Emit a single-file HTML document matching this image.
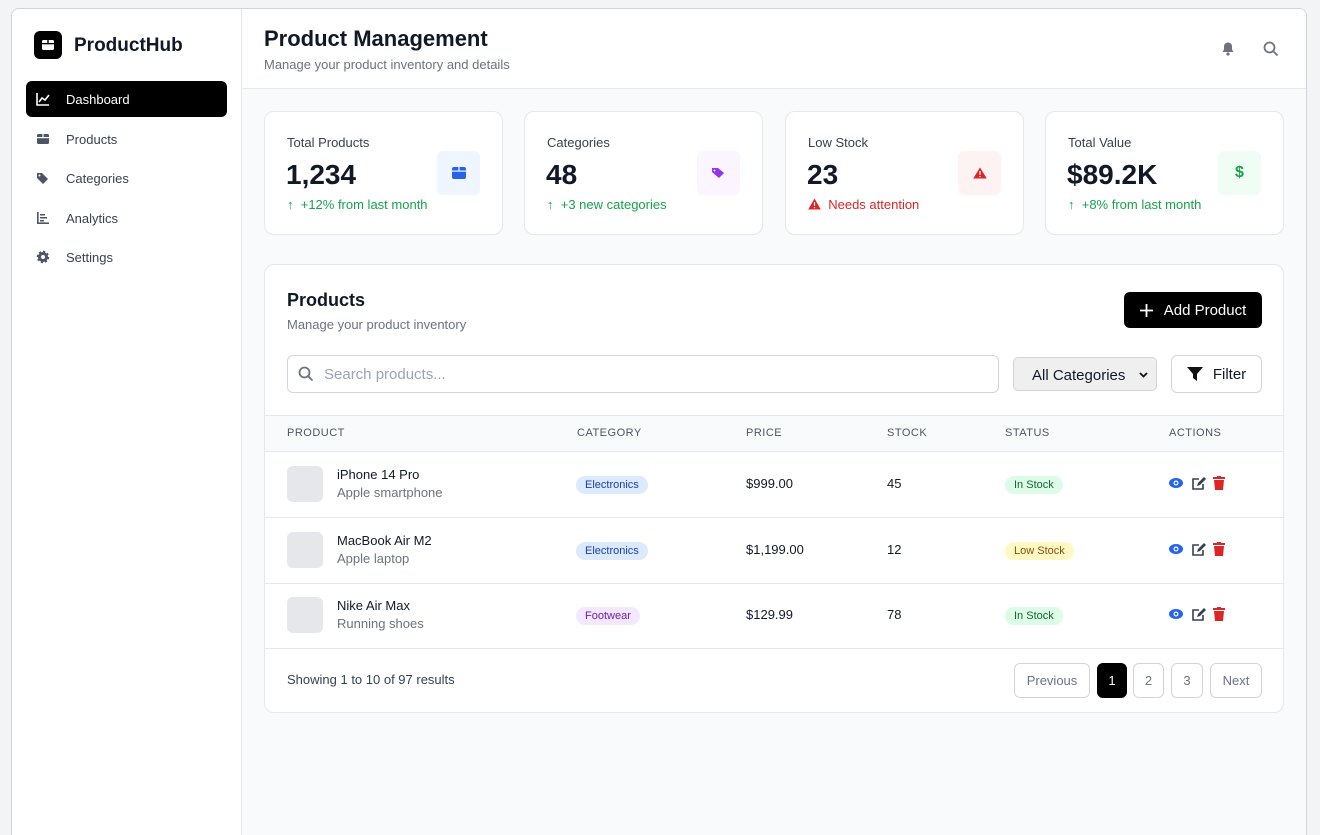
<!DOCTYPE html>
<html style="height:835px;overflow:hidden"><head><meta charset="utf-8"><style>
*{box-sizing:border-box;margin:0;padding:0}
html,body{width:1320px;height:835px;overflow:hidden}
body{background:#f3f4f6;font-family:"Liberation Sans",Arial,sans-serif;color:#111827;position:relative}
.frame{position:absolute;left:11px;top:8px;width:1296px;height:835px;border:1px solid #d1d5db;border-bottom:none;border-radius:8px 8px 0 0;background:#f9fafb;overflow:hidden}
.side{position:absolute;left:0;top:0;width:230px;height:100%;background:#fff;border-right:1px solid #e5e7eb}
.logo{position:absolute;left:22px;top:22px;width:28px;height:28px;background:#000;border-radius:6px}
.brand{position:absolute;left:62px;top:26px;font-size:19px;font-weight:bold}
.nav{position:absolute;left:14px;width:201px;height:36px;border-radius:6px;font-size:13px;color:#374151;display:flex;align-items:center;padding-left:40px}
.nav.act{background:#000;color:#fff}
.nav svg{position:absolute;left:10px;top:11px}
.hdr{position:absolute;left:231px;top:0;right:0;height:80px;background:#fff;border-bottom:1px solid #e5e7eb}
.hdr h1{position:absolute;left:21px;top:17px;font-size:22px}
.hdr p{position:absolute;left:21px;top:48px;font-size:13px;color:#6b7280}
.card{position:absolute;top:102px;width:239px;height:124px;background:#fff;border:1px solid #e5e7eb;border-radius:10px}
.card .l{position:absolute;left:22px;top:23px;font-size:13px;color:#374151}
.card .v{position:absolute;left:21px;top:47px;font-size:28px;font-weight:bold}
.card .s{position:absolute;left:22px;top:85px;font-size:13px;color:#16a34a}
.card .ic{position:absolute;left:172px;top:39px;width:43px;height:44px;border-radius:6px;display:flex;align-items:center;justify-content:center}
.panel{position:absolute;left:252px;top:255px;width:1020px;height:449px;background:#fff;border:1px solid #e5e7eb;border-radius:10px;overflow:hidden}
.th{position:absolute;top:150px;left:0;right:0;height:37px;background:#f9fafb;border-top:1px solid #e5e7eb;border-bottom:1px solid #e5e7eb;font-size:11px;color:#4b5563;letter-spacing:.5px}
.th span,.row span{position:absolute}
.th span{top:11px}
.row{position:absolute;left:0;right:0;height:66px;border-bottom:1px solid #e5e7eb;font-size:13px}
.thumb{position:absolute;left:22px;top:14px;width:36px;height:36px;border-radius:6px;background:#e5e7eb}
.badge{font-size:11px;padding:3px 9px;border-radius:10px}
.pg{position:absolute;top:398px;height:35px;border:1px solid #d1d5db;border-radius:6px;font-size:13px;color:#6b7280;display:flex;align-items:center;justify-content:center}
</style></head><body>
<div class="frame">
<div class="side">
<div class="logo"><svg width="28" height="28"><rect x="8" y="9" width="12" height="10" rx="1.5" fill="#fff"/><rect x="8" y="12" width="12" height="1.3" fill="#000"/><rect x="13.3" y="9" width="1.4" height="3" fill="#000"/></svg></div>
<div class="brand">ProductHub</div>
<div class="nav act" style="top:72px"><svg width="14" height="14" fill="none" stroke="#fff" stroke-width="1.6"><path d="M1 1v12h12M3 10l3-4 3 2 4-5"/></svg>Dashboard</div>
<div class="nav" style="top:112px"><svg width="14" height="14"><rect x="1" y="2" width="12" height="10" rx="1.5" fill="#4b5563"/><rect x="1" y="5" width="12" height="1.2" fill="#fff"/><rect x="6.4" y="2" width="1.2" height="3" fill="#fff"/></svg>Products</div>
<div class="nav" style="top:151px"><svg width="14" height="14"><path d="M1 2h5l6 6-5 5-6-6z" fill="#4b5563"/><circle cx="3.5" cy="4.5" r="1" fill="#fff"/></svg>Categories</div>
<div class="nav" style="top:191px"><svg width="14" height="14" fill="#4b5563"><rect x="1" y="1" width="1.6" height="12"/><rect x="1" y="11.4" width="12" height="1.6"/><rect x="4" y="3" width="5" height="1.5"/><rect x="4" y="6" width="7" height="1.5"/><rect x="4" y="9" width="4" height="1.5"/></svg>Analytics</div>
<div class="nav" style="top:230px"><svg width="14" height="14"><circle cx="7" cy="7" r="5" fill="#4b5563" stroke="#4b5563" stroke-width="2.5" stroke-dasharray="2 1.9"/><circle cx="7" cy="7" r="2" fill="#fff"/></svg>Settings</div>
</div>
<div class="hdr"><h1>Product Management</h1><p>Manage your product inventory and details</p>
<svg style="position:absolute;left:977px;top:32px" width="16" height="16" fill="#6b7280"><path d="M8 1.5c-2.5 0-4 2-4 4v3L2.5 11h11L12 8.5v-3c0-2-1.5-4-4-4z"/><circle cx="8" cy="13" r="1.6"/></svg>
<svg style="position:absolute;left:1019px;top:31px" width="18" height="18" fill="none" stroke="#6b7280" stroke-width="1.8"><circle cx="7.5" cy="7.5" r="5"/><path d="M11 11l4.5 4.5"/></svg>
</div>

<div class="card" style="left:252px"><div class="l">Total Products</div><div class="v">1,234</div><div class="s">↑ &nbsp;+12% from last month</div><div class="ic" style="background:#eff6ff"><svg width="14" height="12"><rect x="0" y="0" width="14" height="12" rx="2" fill="#2563eb"/><rect y="3.5" width="14" height="1.2" fill="#eff6ff"/><rect x="6.4" y="0" width="1.2" height="3.5" fill="#eff6ff"/></svg></div></div>
<div class="card" style="left:512px"><div class="l">Categories</div><div class="v">48</div><div class="s">↑ &nbsp;+3 new categories</div><div class="ic" style="background:#faf5ff"><svg width="16" height="14"><path d="M1 2h6l6 5-5 5-7-6z" fill="#9333ea"/><circle cx="3.5" cy="4.5" r="1" fill="#faf5ff"/></svg></div></div>
<div class="card" style="left:773px"><div class="l">Low Stock</div><div class="v">23</div><div class="s" style="color:#dc2626"><svg width="13" height="12" style="vertical-align:-1px"><path d="M6.5 0.5L12.8 11.5H0.2z" fill="#dc2626"/><rect x="5.9" y="4" width="1.2" height="4" fill="#fff"/><rect x="5.9" y="9" width="1.2" height="1.2" fill="#fff"/></svg>&nbsp; Needs attention</div><div class="ic" style="background:#fef2f2"><svg width="14" height="12"><path d="M7 0.5L13.8 11.5H0.2z" fill="#dc2626"/><rect x="6.4" y="4" width="1.2" height="4" fill="#fff"/><rect x="6.4" y="9" width="1.2" height="1.2" fill="#fff"/></svg></div></div>
<div class="card" style="left:1033px"><div class="l">Total Value</div><div class="v">$89.2K</div><div class="s">↑ &nbsp;+8% from last month</div><div class="ic" style="background:#f0fdf4;color:#16a34a;font-weight:bold;font-size:16px">$</div></div>

<div class="panel">
<div style="position:absolute;left:22px;top:25px;font-size:18px;font-weight:bold">Products</div>
<div style="position:absolute;left:22px;top:52px;font-size:13px;color:#6b7280">Manage your product inventory</div>
<div style="position:absolute;left:859px;top:27px;width:138px;height:36px;background:#000;border-radius:6px;color:#fff;font-size:15px;display:flex;align-items:center;justify-content:center"><svg width="13" height="13" style="margin-right:11px" stroke="#fff" stroke-width="1.8"><path d="M6.5 0v13M0 6.5h13"/></svg>Add Product</div>
<div style="position:absolute;left:22px;top:90px;width:712px;height:38px;border:1px solid #d1d5db;border-radius:6px;font-size:15px;color:#9ca3af;padding:10px 0 0 36px"><svg style="position:absolute;left:10px;top:10px" width="16" height="16" fill="none" stroke="#6b7280" stroke-width="1.8"><circle cx="6.5" cy="6.5" r="5"/><path d="M10 10l4.5 4.5"/></svg>Search products...</div>
<div style="position:absolute;left:748px;top:92px;width:144px;height:34px;border:1px solid #d1d5db;border-radius:5px;background:#efefef;font-size:15px;padding:9px 0 0 18px">All Categories<svg style="position:absolute;right:8px;top:14px" width="9" height="6" fill="none" stroke="#111" stroke-width="1.8"><path d="M1 1l3.5 3.5L8 1"/></svg></div>
<div style="position:absolute;left:906px;top:90px;width:91px;height:38px;border:1px solid #d1d5db;border-radius:6px;font-size:15px;display:flex;align-items:center;justify-content:center"><svg width="16" height="14" style="margin-right:10px"><path d="M0 0h16L10 7v7l-4-3V7z" fill="#111"/></svg>Filter</div>
<div class="th"><span style="left:22px">PRODUCT</span><span style="left:312px">CATEGORY</span><span style="left:481px">PRICE</span><span style="left:622px">STOCK</span><span style="left:740px">STATUS</span><span style="left:904px">ACTIONS</span></div>

<div class="row" style="top:187px"><div class="thumb"></div><span style="left:72px;top:15px">iPhone 14 Pro</span><span style="left:72px;top:33px;color:#6b7280">Apple smartphone</span><span class="badge" style="left:311px;top:24px;background:#dbeafe;color:#1e40af">Electronics</span><span style="left:481px;top:24px">$999.00</span><span style="left:622px;top:24px">45</span><span class="badge" style="left:740px;top:24px;background:#dcfce7;color:#166534">In Stock</span>ICONS</div>
<div class="row" style="top:253px"><div class="thumb"></div><span style="left:72px;top:15px">MacBook Air M2</span><span style="left:72px;top:33px;color:#6b7280">Apple laptop</span><span class="badge" style="left:311px;top:24px;background:#dbeafe;color:#1e40af">Electronics</span><span style="left:481px;top:24px">$1,199.00</span><span style="left:622px;top:24px">12</span><span class="badge" style="left:740px;top:24px;background:#fef9c3;color:#854d0e">Low Stock</span>ICONS</div>
<div class="row" style="top:318px"><div class="thumb"></div><span style="left:72px;top:15px">Nike Air Max</span><span style="left:72px;top:33px;color:#6b7280">Running shoes</span><span class="badge" style="left:311px;top:24px;background:#f3e8ff;color:#6b21a8">Footwear</span><span style="left:481px;top:24px">$129.99</span><span style="left:622px;top:24px">78</span><span class="badge" style="left:740px;top:24px;background:#dcfce7;color:#166534">In Stock</span>ICONS</div>

<div style="position:absolute;left:22px;top:407px;font-size:13px;color:#374151">Showing 1 to 10 of 97 results</div>
<div class="pg" style="left:749px;width:76px">Previous</div>
<div class="pg" style="left:832px;width:30px;background:#000;border-color:#000;color:#fff">1</div>
<div class="pg" style="left:868px;width:31px">2</div>
<div class="pg" style="left:906px;width:32px">3</div>
<div class="pg" style="left:945px;width:52px">Next</div>
</div>
</div>
<script>
var ic='<svg style="position:absolute;left:904px;top:24px" width="56" height="14"><ellipse cx="7" cy="7" rx="7" ry="5" fill="#2563eb"/><circle cx="7" cy="7" r="2.5" fill="#fff"/><circle cx="7" cy="7" r="1.3" fill="#2563eb"/><path d="M30 3h-6v10h10V8" fill="none" stroke="#374151" stroke-width="1.6"/><path d="M28 10l1-3 6-6 2 2-6 6z" fill="#374151"/><rect x="44" y="1" width="12" height="2" fill="#dc2626"/><rect x="48" y="0" width="4" height="2" fill="#dc2626"/><path d="M45 4h10l-1 10h-8z" fill="#dc2626"/></svg>';
document.querySelectorAll('.row').forEach(function(r){r.innerHTML=r.innerHTML.replace('ICONS',ic);});
</script>
</body></html>
